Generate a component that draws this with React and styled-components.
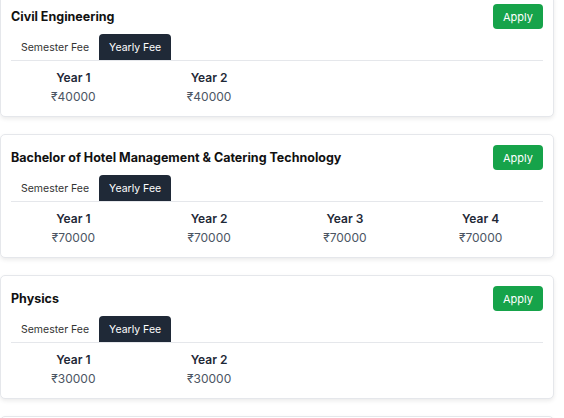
import React from "react"
import styled, { createGlobalStyle } from "styled-components"

const GlobalStyle = createGlobalStyle`
  body {
    margin: 0;
    background: #fff;
    font-family: Inter, "Noto Sans", "DejaVu Sans", sans-serif;
    overflow: hidden;
  }
`

const Page = styled.div`
  display: flex;
  flex-direction: column;
  gap: 17px;
  width: 554px;
  margin-top: -7px;
`

const Card = styled.div`
  background: #fff;
  border: 1px solid #e5e7eb;
  border-radius: 5px;
  box-shadow: 0 2px 4px rgba(0, 0, 0, 0.08);
  padding: 10px 10px 12px;
  height: 124px;
  box-sizing: border-box;
  flex-shrink: 0;
`

const Header = styled.div`
  display: flex;
  justify-content: space-between;
  align-items: center;
  height: 25px;
`

const Title = styled.div`
  font-size: 12.5px;
  font-weight: 700;
  color: #111;
`

const ApplyButton = styled.button`
  width: 50px;
  height: 25px;
  border: none;
  border-radius: 4px;
  background: #16a34a;
  color: #fff;
  font-family: inherit;
  font-size: 11px;
  padding: 0;
`

const Tabs = styled.div`
  display: flex;
  margin-top: 5px;
  border-bottom: 1px solid #e5e7eb;
`

const Tab = styled.div`
  height: 26px;
  display: flex;
  align-items: center;
  padding: 0 10px;
  font-size: 10.5px;
  border-radius: 4px 4px 0 0;
  color: ${(p) => (p.$active ? "#fff" : "#333")};
  background: ${(p) => (p.$active ? "#1f2937" : "transparent")};
`

const Years = styled.div`
  display: grid;
  grid-template-columns: repeat(4, 1fr);
  column-gap: 11px;
  padding-top: 9px;
`

const YearCell = styled.div`
  display: flex;
  flex-direction: column;
  align-items: center;
  gap: 4px;
`

const YearLabel = styled.div`
  font-size: 12px;
  font-weight: 600;
  color: #1f2937;
`

const Amount = styled.div`
  font-size: 12px;
  color: #4b5563;
`

const courses = [
  { name: "Civil Engineering", fees: [40000, 40000] },
  {
    name: "Bachelor of Hotel Management & Catering Technology",
    fees: [70000, 70000, 70000, 70000],
  },
  { name: "Physics", fees: [30000, 30000] },
  { name: "Chemistry", fees: [30000, 30000] },
]

const App = () => (
  <>
    <GlobalStyle />
    <Page>
      {courses.map((c) => (
        <Card key={c.name}>
          <Header>
            <Title>{c.name}</Title>
            <ApplyButton>Apply</ApplyButton>
          </Header>
          <Tabs>
            <Tab>Semester Fee</Tab>
            <Tab $active>Yearly Fee</Tab>
          </Tabs>
          <Years>
            {c.fees.map((f, i) => (
              <YearCell key={i}>
                <YearLabel>Year {i + 1}</YearLabel>
                <Amount>₹{f}</Amount>
              </YearCell>
            ))}
          </Years>
        </Card>
      ))}
    </Page>
  </>
)

export default App
